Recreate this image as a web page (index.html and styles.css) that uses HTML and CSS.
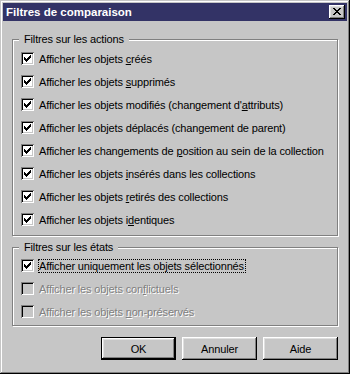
FILE: index.html
```html
<!DOCTYPE html>
<html lang="fr">
<head>
<meta charset="utf-8">
<title>Filtres de comparaison</title>
<link rel="stylesheet" href="styles.css">
</head>
<body>
<div class="window">
  <div class="titlebar">
    <span class="title">Filtres de comparaison</span>
    <div class="close"><svg class="x" width="8" height="7" viewBox="0 0 8 7" shape-rendering="crispEdges"><path d="M0 0h2v1H0zM6 0h2v1H6zM1 1h2v1H1zM5 1h2v1H5zM2 2h4v1H2zM3 3h2v1H3zM2 4h4v1H2zM1 5h2v1H1zM5 5h2v1H5zM0 6h2v1H0zM6 6h2v1H6z" fill="#000"/></svg></div>
  </div>

  <div class="group g1">
    <span class="legend">Filtres sur les actions</span>
    <div class="row"><span class="cb"><svg class="chk" width="7" height="7" viewBox="0 0 7 7" shape-rendering="crispEdges"><path d="M0 2h1v3H0zM1 3h1v3H1zM2 4h1v3H2zM3 3h1v3H3zM4 2h1v3H4zM5 1h1v3H5zM6 0h1v3H6z" fill="#000"/></svg></span><span class="lbl">Afficher les objets <u>c</u>réés</span></div>
    <div class="row"><span class="cb"><svg class="chk" width="7" height="7" viewBox="0 0 7 7" shape-rendering="crispEdges"><path d="M0 2h1v3H0zM1 3h1v3H1zM2 4h1v3H2zM3 3h1v3H3zM4 2h1v3H4zM5 1h1v3H5zM6 0h1v3H6z" fill="#000"/></svg></span><span class="lbl">Afficher les objets <u>s</u>upprimés</span></div>
    <div class="row"><span class="cb"><svg class="chk" width="7" height="7" viewBox="0 0 7 7" shape-rendering="crispEdges"><path d="M0 2h1v3H0zM1 3h1v3H1zM2 4h1v3H2zM3 3h1v3H3zM4 2h1v3H4zM5 1h1v3H5zM6 0h1v3H6z" fill="#000"/></svg></span><span class="lbl">Afficher les objets modifiés (changement d'<u>a</u>ttributs)</span></div>
    <div class="row"><span class="cb"><svg class="chk" width="7" height="7" viewBox="0 0 7 7" shape-rendering="crispEdges"><path d="M0 2h1v3H0zM1 3h1v3H1zM2 4h1v3H2zM3 3h1v3H3zM4 2h1v3H4zM5 1h1v3H5zM6 0h1v3H6z" fill="#000"/></svg></span><span class="lbl">Afficher les objets déplacés (changement de parent)</span></div>
    <div class="row"><span class="cb"><svg class="chk" width="7" height="7" viewBox="0 0 7 7" shape-rendering="crispEdges"><path d="M0 2h1v3H0zM1 3h1v3H1zM2 4h1v3H2zM3 3h1v3H3zM4 2h1v3H4zM5 1h1v3H5zM6 0h1v3H6z" fill="#000"/></svg></span><span class="lbl">Afficher les changements de <u>p</u>osition au sein de la collection</span></div>
    <div class="row"><span class="cb"><svg class="chk" width="7" height="7" viewBox="0 0 7 7" shape-rendering="crispEdges"><path d="M0 2h1v3H0zM1 3h1v3H1zM2 4h1v3H2zM3 3h1v3H3zM4 2h1v3H4zM5 1h1v3H5zM6 0h1v3H6z" fill="#000"/></svg></span><span class="lbl">Afficher les objets <u>i</u>nsérés dans les collections</span></div>
    <div class="row"><span class="cb"><svg class="chk" width="7" height="7" viewBox="0 0 7 7" shape-rendering="crispEdges"><path d="M0 2h1v3H0zM1 3h1v3H1zM2 4h1v3H2zM3 3h1v3H3zM4 2h1v3H4zM5 1h1v3H5zM6 0h1v3H6z" fill="#000"/></svg></span><span class="lbl">Afficher les objets <u>r</u>etirés des collections</span></div>
    <div class="row"><span class="cb"><svg class="chk" width="7" height="7" viewBox="0 0 7 7" shape-rendering="crispEdges"><path d="M0 2h1v3H0zM1 3h1v3H1zM2 4h1v3H2zM3 3h1v3H3zM4 2h1v3H4zM5 1h1v3H5zM6 0h1v3H6z" fill="#000"/></svg></span><span class="lbl">Afficher les objets i<u>d</u>entiques</span></div>
  </div>

  <div class="group g2">
    <span class="legend">Filtres sur les états</span>
    <div class="row"><span class="cb"><svg class="chk" width="7" height="7" viewBox="0 0 7 7" shape-rendering="crispEdges"><path d="M0 2h1v3H0zM1 3h1v3H1zM2 4h1v3H2zM3 3h1v3H3zM4 2h1v3H4zM5 1h1v3H5zM6 0h1v3H6z" fill="#000"/></svg></span><span class="lbl focus">Afficher uniquement les objets sélectionnés</span></div>
    <div class="row disabled"><span class="cb"></span><span class="lbl">Afficher les objets con<u>f</u>lictuels</span></div>
    <div class="row disabled"><span class="cb"></span><span class="lbl">Afficher les objets <u>n</u>on-préservés</span></div>
  </div>

  <div class="buttons">
    <div class="btn default">OK</div>
    <div class="btn">Annuler</div>
    <div class="btn">Aide</div>
  </div>
</div>
</body>
</html>
```

FILE: styles.css
```css
html, body {
  margin: 0;
  padding: 0;
  background: #c6c6c6;
}

.window {
  width: 350px;
  height: 374px;
  box-sizing: border-box;
  padding: 3px;
  background: #c6c6c6;
  box-shadow: inset -1px -1px 0 #000, inset 1px 1px 0 #c6c6c6, inset -2px -2px 0 #808080, inset 2px 2px 0 #fff;
  font-family: "Liberation Sans", Arial, sans-serif;
  font-size: 11px;
  letter-spacing: -0.15px;
  color: #000;
  display: flex;
  flex-direction: column;
}

.titlebar {
  height: 18px;
  background: #333366;
  display: flex;
  align-items: center;
  justify-content: space-between;
  padding: 0 2px 0 3px;
}

.title {
  color: #fff;
  font-weight: bold;
  font-size: 11.5px;
  letter-spacing: 0;
}

.close {
  width: 16px;
  height: 14px;
  box-sizing: border-box;
  background: #c6c6c6;
  box-shadow: inset -1px -1px 0 #000, inset 1px 1px 0 #fff, inset -2px -2px 0 #808080, inset 2px 2px 0 #dfdfdf;
  display: flex;
  padding: 3px 0 0 4px;
}

.x {
  display: block;
}

.group {
  position: relative;
  margin: 0 9px;
  border: 1px solid #808080;
  box-shadow: inset 1px 1px 0 #fff, 1px 1px 0 #fff;
  display: flex;
  flex-direction: column;
  padding: 0 0 0 8px;
}

.g1 {
  margin-top: 18px;
  padding-top: 7px;
  padding-bottom: 4px;
}

.g2 {
  margin-top: 11px;
  padding-top: 6px;
  padding-bottom: 2px;
}

.legend {
  position: absolute;
  top: -8px;
  left: 6px;
  padding: 0 5px 0 5px;
  background: #c6c6c6;
  line-height: 14px;
}

.row {
  height: 23px;
  display: flex;
  align-items: center;
  gap: 5px;
}

.cb {
  width: 13px;
  height: 13px;
  box-sizing: border-box;
  background: #fff;
  box-shadow: inset 1px 1px 0 #808080, inset -1px -1px 0 #fff, inset 2px 2px 0 #000, inset -2px -2px 0 #c6c6c6;
  flex: none;
}

.chk {
  display: block;
  margin: 3px 0 0 3px;
}

.lbl {
  white-space: nowrap;
  line-height: 12px;
}

.lbl u {
  text-underline-offset: 1px;
}

.focus {
  border: 1px dotted #000;
  margin-left: -1px;
  padding: 0 1px 0 0;
}

.disabled .cb {
  background: #c6c6c6;
}

.disabled .lbl {
  color: #808080;
  text-shadow: 1px 1px 0 #fff;
}

.buttons {
  display: flex;
  justify-content: flex-end;
  gap: 6px;
  margin: 11px 9px 0 0;
}

.btn {
  width: 75px;
  height: 23px;
  box-sizing: border-box;
  display: flex;
  align-items: center;
  justify-content: center;
  background: #c6c6c6;
  box-shadow: inset -1px -1px 0 #000, inset 1px 1px 0 #fff, inset -2px -2px 0 #808080, inset 2px 2px 0 #dfdfdf;
}

.btn.default {
  border: 1px solid #000;
}
```
